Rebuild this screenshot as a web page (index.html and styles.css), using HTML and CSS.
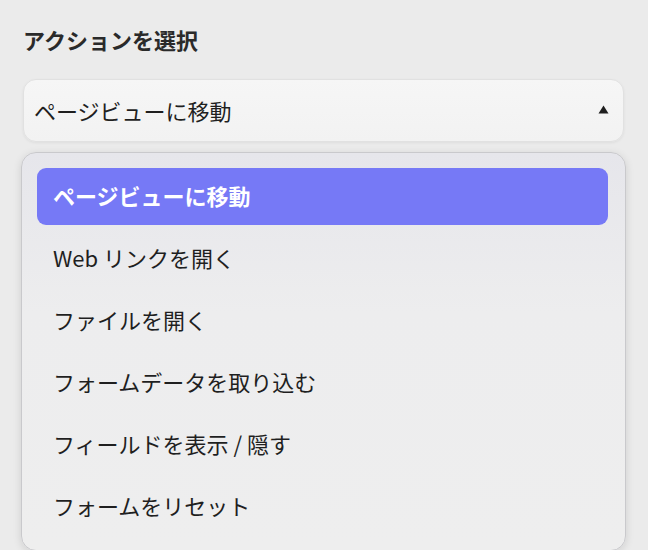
FILE: index.html
```html
<!DOCTYPE html>
<html lang="ja">
<head>
<meta charset="utf-8">
<title>アクションを選択</title>
<link rel="stylesheet" href="styles.css">
</head>
<body>
<div class="panel">
  <h1 class="title">アクションを選択</h1>
  <div class="select">
    <span class="select-value">ページビューに移動</span>
    <svg class="caret" width="11" height="9" viewBox="0 0 11 9"><path d="M5.5 0.5 L10.5 8.5 L0.5 8.5 Z" fill="#1e1e1e"/></svg>
  </div>
  <ul class="menu">
    <li class="item active">ページビューに移動</li>
    <li class="item">Web リンクを開く</li>
    <li class="item">ファイルを開く</li>
    <li class="item">フォームデータを取り込む</li>
    <li class="item">フィールドを表示 / 隠す</li>
    <li class="item">フォームをリセット</li>
  </ul>
</div>
</body>
</html>
```

FILE: styles.css
```css
html, body {
  margin: 0;
  padding: 0;
  background: #ebebeb;
  height: 100%;
  overflow: hidden;
}
body {
  font-family: "Noto Sans CJK JP", "Noto Sans", sans-serif;
  color: #222222;
}
.panel {
  padding: 23px 24px 0 23px;
  display: flex;
  flex-direction: column;
}
.title {
  margin: 0;
  font-size: 22px;
  line-height: 32px;
  font-weight: 700;
  color: #2a2a2a;
}
.select {
  margin-top: 24px;
  height: 59px;
  border: 1px solid #e1e1e1;
  border-radius: 13px;
  background: linear-gradient(#f6f6f6, #f2f2f2);
  box-shadow: 0 1px 3px rgba(0, 0, 0, 0.06);
  display: flex;
  align-items: center;
  justify-content: space-between;
  padding: 0 14px 2px 10px;
}
.select-value {
  font-size: 22px;
  font-weight: 400;
  color: #1f1f1f;
}
.caret {
  display: block;
}
.menu {
  list-style: none;
  margin: 10px -2px 0 -2px;
  padding: 15px 17px 15px 15px;
  border: 1px solid #c9c9cc;
  border-radius: 15px;
  background: linear-gradient(#e6e6eb, #ededee 40%, #eeeeee);
  box-shadow: 0 2px 8px rgba(0, 0, 0, 0.12);
  display: flex;
  flex-direction: column;
  gap: 5px;
}
.item {
  height: 57px;
  box-sizing: border-box;
  display: flex;
  align-items: center;
  padding: 0 0 3px 16px;
  border-radius: 9px;
  font-size: 22px;
  font-weight: 400;
  color: #1f1f1f;
}
.item.active {
  background: #7679f6;
  color: #ffffff;
  font-weight: 700;
}
```
